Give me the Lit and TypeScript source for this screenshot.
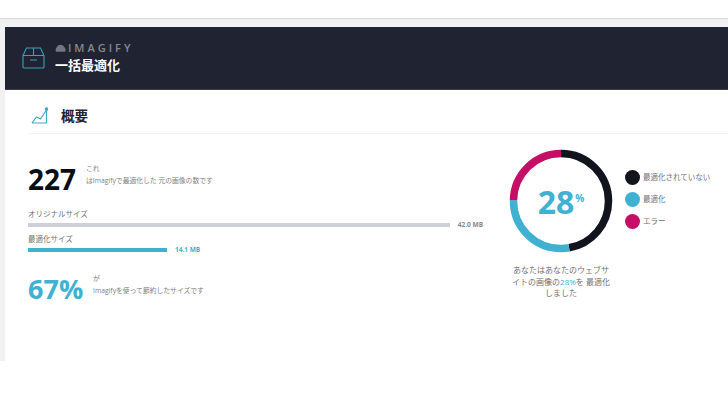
import { LitElement, html, svg, css } from "lit";
import { customElement } from "lit/decorators.js";

@customElement("app-root")
export class AppRoot extends LitElement {
  static styles = css`
    :host { display: block; width: 728px; height: 410px; background: #fff; overflow: hidden; font-family: "Open Sans", "Noto Sans CJK JP", sans-serif; }
    .frame { margin-top: 18px; height: 343px; box-sizing: border-box; background: #f1f1f1; border-top: 1px solid #d8d8d8; padding: 8px 0 0 5px; display: flex; flex-direction: column; }
    .head { height: 63px; flex: none; box-sizing: border-box; background: #1f2332; border-bottom: 1px solid #3a3e4c; display: flex; align-items: center; padding-left: 17px; gap: 10px; }
    .titles { display: flex; flex-direction: column; gap: 1px; margin-top: -1px; }
    .brand { display: flex; align-items: center; gap: 2px; font-size: 11px; line-height: 14px; letter-spacing: 3px; color: #85898f; font-weight: 600; font-family: "Open Sans", sans-serif; }
    .h1 { font-size: 13px; line-height: 18px; color: #fff; font-weight: 700; }
    .body { flex: 1; background: #fff; display: flex; flex-direction: column; }
    .sec { height: 44px; flex: none; box-sizing: border-box; margin-left: 23px; border-bottom: 1px solid #f3f3f3; display: flex; align-items: center; gap: 13px; padding: 8px 0 0 3px; }
    .sec h2 { margin: 0; font-size: 13.500px; font-weight: 700; color: #1f2332; line-height: 18px; }
    .cols { display: flex; flex: 1; }
    .left { width: 455px; flex: none; margin-left: 23px; padding-top: 26px; }
    .stat { display: flex; gap: 10px; align-items: center; }
    .count { font-size: 28px; line-height: 38px; font-weight: 700; color: #0b0d14; width: 48px; }
    .pct { font-size: 27px; line-height: 38px; font-weight: 700; color: #40b1d0; width: 55px; }
    .note { font-size: 6.800px; line-height: 10px; color: #808080; display: flex; flex-direction: column; gap: 2px; margin-top: -9px; }
    .bars { margin-top: 11px; display: flex; flex-direction: column; gap: 5px; }
    .lbl { font-size: 7.500px; line-height: 11px; color: #707070; margin-bottom: 1px; }
    .row { display: flex; align-items: center; gap: 8px; }
    .track { height: 4px; }
    .g { width: 422px; background: #cfd0d5; }
    .b { width: 139px; background: #40b1d0; }
    .v { font-size: 6.500px; line-height: 8px; font-weight: 700; }
    .v.gt { color: #888; }
    .v.bt { color: #40b1d0; }
    .st2 { margin-top: 16px; }
    .right { display: flex; gap: 13px; padding-top: 15px; margin-left: 26px; }
    .chart { width: 104px; display: flex; flex-direction: column; align-items: center; }
    .ring { position: relative; width: 104px; height: 104px; }
    .ring svg { display: block; }
    .center { position: absolute; inset: 0; display: flex; align-items: center; justify-content: center; color: #40b1d0; font-weight: 700; font-size: 32px; }
    .center sup { font-size: 10px; line-height: 1; align-self: center; margin: -7px 0 0 1px; }
    .cap { margin-top: 11px; text-align: center; font-size: 8px; line-height: 11.500px; color: #707070; white-space: nowrap; }
    .cap b { color: #40b1d0; font-weight: 400; }
    .legend { display: flex; flex-direction: column; gap: 6px; padding-top: 20px; margin-left: -1px; }
    .li { display: flex; align-items: center; gap: 3px; font-size: 7.500px; color: #707070; line-height: 16px; }
    .dot { width: 15px; height: 15px; border-radius: 50%; flex: none; }
  `;

  render() {
    const r = 47.5;
    const c = 2 * Math.PI * r;
    const seg = (color: string, from: number, to: number) => svg`<circle
      cx="52" cy="52" r=${r} fill="none" stroke=${color} stroke-width="7.500"
      stroke-dasharray="${(to - from) * c} ${c}" stroke-dashoffset="${-from * c}"
      transform="rotate(-90 52 52)"></circle>`;
    return html`
      <div class="frame">
        <div class="head">
          <svg width="23" height="22" viewBox="0 0 23 22" fill="none" stroke="#3f9fb8" stroke-width="1.100">
            <path d="M1 8.500 4.500 1h14L22 8.500V20a1 1 0 0 1-1 1H2a1 1 0 0 1-1-1z"/>
            <path d="M1 8.500h21M11.500 1v7.500M8 13h7"/>
          </svg>
          <div class="titles">
            <div class="brand">
              <svg width="11" height="8" viewBox="0 0 12 8"><path d="M1 8a5 5 0 0 1 1-5 4.500 4.500 0 0 1 8 0 4 4 0 0 1 1 5z" fill="#74777f"/></svg>
              <span>IMAGIFY</span>
            </div>
            <div class="h1">一括最適化</div>
          </div>
        </div>
        <div class="body">
          <div class="sec">
            <svg width="17" height="17" viewBox="0 0 17 17" fill="none" stroke="#46a9c2" stroke-width="1.200">
              <path d="M1 16h14.500V3M1 16l4.500-6 4 2 6-9"/>
              <circle cx="15.500" cy="2" r="1.200" fill="#46a9c2"/>
            </svg>
            <h2>概要</h2>
          </div>
          <div class="cols">
            <div class="left">
              <div class="stat">
                <div class="count">227</div>
                <div class="note"><span>これ</span><span>はImagifyで最適化した 元の画像の数です</span></div>
              </div>
              <div class="bars">
                <div>
                  <div class="lbl">オリジナルサイズ</div>
                  <div class="row"><div class="track g"></div><span class="v gt">42.0 MB</span></div>
                </div>
                <div>
                  <div class="lbl">最適化サイズ</div>
                  <div class="row"><div class="track b"></div><span class="v bt">14.1 MB</span></div>
                </div>
              </div>
              <div class="stat st2">
                <div class="pct">67%</div>
                <div class="note"><span>が</span><span>Imagifyを使って節約したサイズです</span></div>
              </div>
            </div>
            <div class="right">
              <div class="chart">
                <div class="ring">
                  <svg width="104" height="104" viewBox="0 0 104 104">
                    ${seg("#12141d", 0, 0.472)}
                    ${seg("#40b1d0", 0.472, 0.752)}
                    ${seg("#c50f66", 0.752, 1)}
                  </svg>
                  <div class="center">28<sup>%</sup></div>
                </div>
                <div class="cap">
                  <div>あなたはあなたのウェブサ</div>
                  <div>イトの画像の<b>28%</b>を 最適化</div>
                  <div>しました</div>
                </div>
              </div>
              <div class="legend">
                <div class="li"><span class="dot" style="background:#12141d"></span>最適化されていない</div>
                <div class="li"><span class="dot" style="background:#40b1d0"></span>最適化</div>
                <div class="li"><span class="dot" style="background:#c50f66"></span>エラー</div>
              </div>
            </div>
          </div>
        </div>
      </div>
    `;
  }
}
